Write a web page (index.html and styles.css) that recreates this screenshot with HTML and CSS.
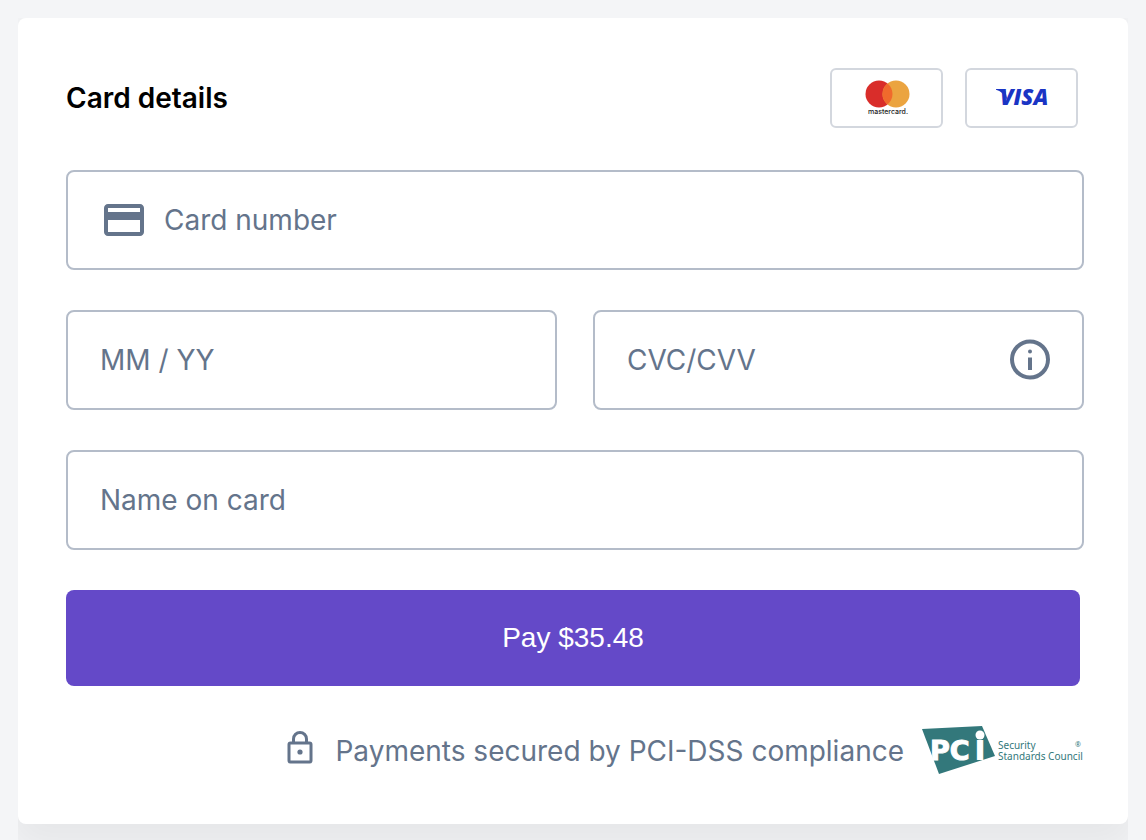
FILE: index.html
```html
<!DOCTYPE html>
<html lang="en">
<head>
  <meta charset="UTF-8" />
  <meta name="viewport" content="width=device-width, initial-scale=1.0" />
  <title>Card details</title>
  <link rel="stylesheet" href="styles.css">
</head>
<body>
  <main class="container">
    <form class="card">
      <div class="card-header">
        <h1>Card details</h1>
        <div class="brands">
          <div class="brand">
            <svg width="46" height="38" viewBox="0 0 46 38" role="img" aria-label="Mastercard">
              <circle cx="15" cy="15" r="13.500" fill="#d92d2a" />
              <circle cx="32" cy="15" r="13.500" fill="#eba440" />
              <path d="M23.500 4.500a13.500 13.500 0 0 1 0 21a13.500 13.500 0 0 1 0-21z" fill="#f06a2c" />
              <text class="mastercard-text" x="24" y="35" text-anchor="middle">mastercard.</text>
            </svg>
          </div>
          <div class="brand">
            <svg width="60" height="34" viewBox="0 0 60 34" role="img" aria-label="Visa">
              <path d="M4 8h6.500q2.500 0 3 2.500l2 9Q11 10.500 4 8.800z" fill="#1a34c4" />
              <text class="visa-text" x="8" y="24">VISA</text>
            </svg>
          </div>
        </div>
      </div>

      <div class="fields">
        <label class="field wide">
          <svg width="48" height="48" viewBox="0 0 24 24" fill="#64748b" aria-hidden="true">
            <path d="M20 4H4c-1.110 0-2 .890-2 2v12c0 1.110.890 2 2 2h16c1.110 0 2-.890 2-2V6c0-1.110-.890-2-2-2zm0 14H4v-6h16v6zm0-10H4V6h16v2z" />
          </svg>
          <input type="text" name="number" placeholder="Card number" aria-label="Card number" inputmode="numeric" />
        </label>
        <label class="field">
          <input type="text" name="expiry" placeholder="MM / YY" aria-label="Expiry date" />
        </label>
        <label class="field">
          <input type="text" name="cvc" placeholder="CVC/CVV" aria-label="CVC/CVV" inputmode="numeric" />
          <svg width="48" height="48" viewBox="0 0 48 48" fill="#64748b" aria-hidden="true">
            <circle cx="24" cy="23.500" r="18" fill="none" stroke="#64748b" stroke-width="4" />
            <circle cx="24" cy="15.500" r="2" />
            <path d="M22 21.500h4V34h-4z" />
          </svg>
        </label>
        <label class="field wide">
          <input type="text" name="name" placeholder="Name on card" aria-label="Name on card" />
        </label>
      </div>

      <button type="submit">Pay $35.48</button>

      <div class="secure">
        <svg class="lock" width="26" height="34" viewBox="0 0 26 34" fill="none" stroke="#64748b" stroke-width="3" aria-hidden="true">
          <rect x="2" y="12" width="22" height="19" rx="1.500" />
          <path d="M6.500 12V8a6.500 6.500 0 0 1 13 0v4" />
          <circle cx="13" cy="21" r="2.600" fill="#64748b" stroke="none" />
        </svg>
        <span>Payments secured by PCI-DSS compliance</span>
        <svg class="pci" width="162" height="50" viewBox="0 0 162 50" role="img" aria-label="PCI Security Standards Council">
          <path d="M0 3L60 0l13 30l-56 18z" fill="#33787b" />
          <text class="pci-text" x="8" y="34">PC</text>
          <text class="pci-i" x="52" y="34">i</text>
          <circle cx="58" cy="9" r="4.500" fill="#fff" />
          <text class="pci-small" x="76" y="23">Security</text>
          <text class="pci-small" x="76" y="34">Standards Council</text>
          <text class="pci-mark" x="153" y="21">®</text>
        </svg>
      </div>
    </form>
  </main>
</body>
</html>
```

FILE: styles.css
```css
* {
  box-sizing: border-box;
}

body {
  font-family: Inter, 'Liberation Sans', sans-serif;
  font-size: 28px;
  background: #f4f5f7;
  color: #64748b;
  margin: 0;
  padding: 18px 18px 0;
}

/* keeps the card shadow inside the column */
.container {
  overflow: hidden;
  padding-bottom: 16px;
}

.card {
  background: #fff;
  border-radius: 8px;
  padding: 50px 44px 50px 48px;
  box-shadow: 0 16px 40px 10px rgba(0, 0, 0, 0.06);
}

.card-header {
  display: flex;
  justify-content: space-between;
  align-items: center;
  margin: 0 6px 42px 0;
}

h1 {
  margin: 0;
  font-size: 28px;
  font-weight: 600;
  color: #000;
}

.brands {
  display: flex;
  gap: 22px;
}

.brand {
  display: flex;
  align-items: center;
  justify-content: center;
  width: 113px;
  height: 60px;
  border: 2px solid #d3d7de;
  border-radius: 6px;
}

.mastercard-text {
  font-family: Inter, sans-serif;
  font-size: 7px;
  font-weight: 500;
  fill: #222;
}

.visa-text {
  font-family: 'Open Sans', sans-serif;
  font-size: 22px;
  font-weight: 800;
  font-style: italic;
  fill: #1a34c4;
}

.fields {
  display: grid;
  grid-template-columns: repeat(2, minmax(0, 1fr));
  gap: 40px 36px;
}

.field {
  display: flex;
  align-items: center;
  gap: 16px;
  height: 100px;
  padding: 0 28px 0 32px;
  border: 2px solid #b4bcc9;
  border-radius: 8px;
}

.field:focus-within {
  border-color: #6449c8;
}

.field svg {
  flex-shrink: 0;
}

.wide {
  grid-column: span 2;
}

input {
  flex: 1;
  min-width: 0;
  padding: 0;
  border: none;
  outline: none;
  background: none;
  font: inherit;
  color: #1e293b;
}

input::placeholder {
  color: #64748b;
  opacity: 1;
}

button {
  display: block;
  width: calc(100% - 4px);
  height: 96px;
  margin-top: 40px;
  background: #6449c8;
  color: #fff;
  border: none;
  border-radius: 8px;
  font-family: 'Liberation Sans', sans-serif;
  font-size: 28px;
  cursor: pointer;
}

button:hover {
  background: #5439b6;
}

.secure {
  display: flex;
  justify-content: flex-end;
  align-items: center;
  height: 50px;
  margin-top: 40px;
  margin-bottom: -2px;
}

.lock {
  margin: 0 22px 6px 0;
}

.pci {
  margin-left: 18px;
}

.pci-text {
  font-family: 'DejaVu Sans', sans-serif;
  font-size: 27px;
  font-weight: 700;
  fill: #fff;
  stroke: #fff;
  stroke-width: 1px;
}

.pci-i {
  font-family: 'DejaVu Sans', sans-serif;
  font-size: 35px;
  font-weight: 700;
  fill: #fff;
}

.pci-small {
  font-family: 'Noto Sans', sans-serif;
  font-size: 10px;
  fill: #33787b;
}

.pci-mark {
  font-family: 'Noto Sans', sans-serif;
  font-size: 7px;
  fill: #33787b;
}
```
